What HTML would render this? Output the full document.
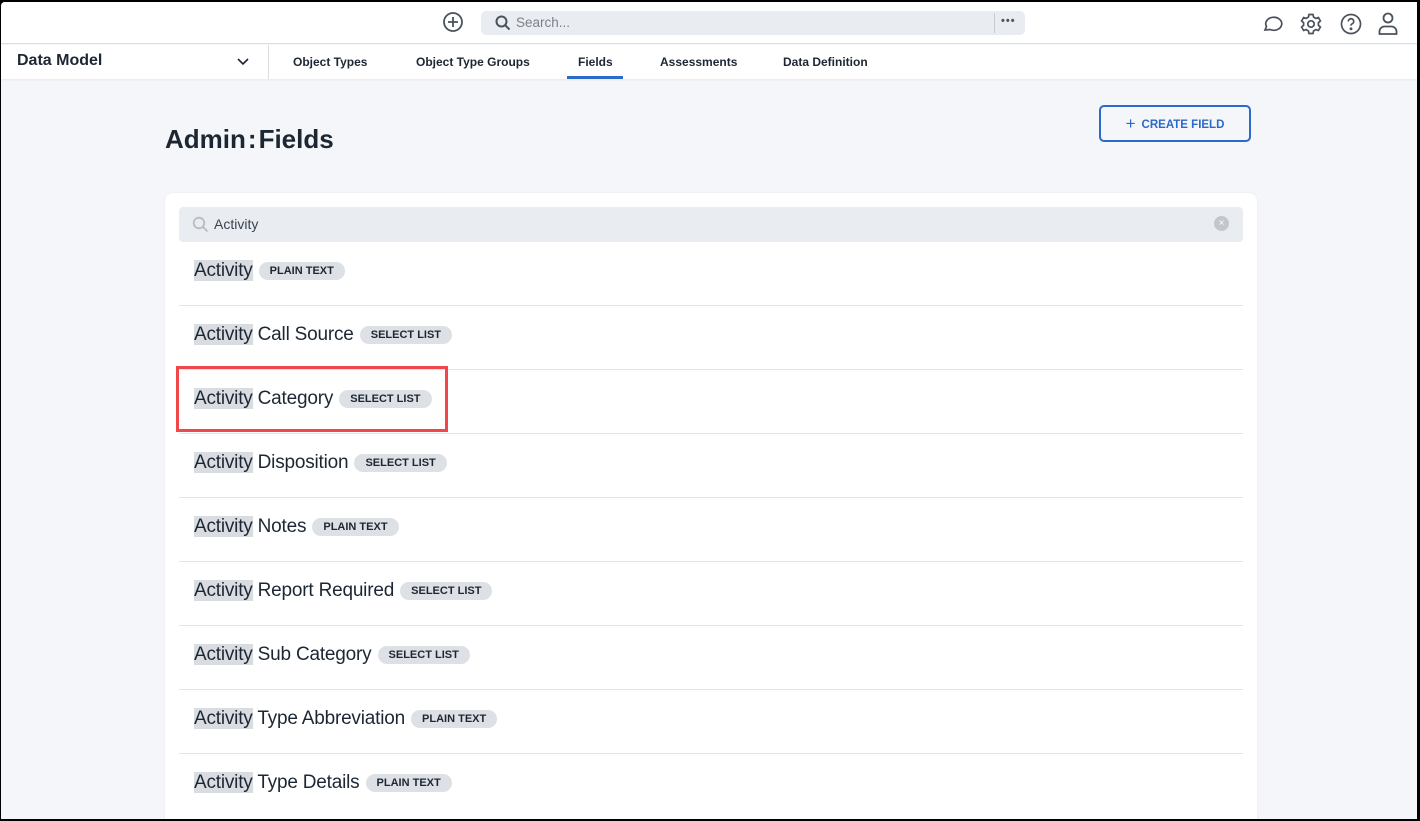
<!DOCTYPE html>
<html><head><style>
*{box-sizing:border-box;margin:0;padding:0}
body{width:1420px;height:821px;background:#000;font-family:"Liberation Sans",sans-serif;overflow:hidden;position:relative}
#app{position:absolute;left:1px;top:2px;width:1416px;height:817px;background:#f5f6fa;overflow:hidden;border-top-left-radius:4px}
.top{position:absolute;left:0;top:0;width:100%;height:42px;background:#fff;border-bottom:1px solid #dcdee2}
.nav{position:absolute;left:0;top:43px;width:100%;height:34px;background:#fff;box-shadow:0 1px 2px rgba(0,0,0,.06)}
.nav .dm{position:absolute;left:16px;top:7px;font-size:16px;font-weight:bold;color:#1d2733}
.nav .sep{position:absolute;left:267px;top:0;width:1px;height:34px;background:#dcdee2}
.tab{position:absolute;top:10px;font-size:12px;font-weight:bold;color:#1d2733}
.search{position:absolute;left:480px;top:9px;width:544px;height:24px;background:#e9ecf0;border-radius:5px}
.search span{position:absolute;left:35px;top:4px;font-size:13.5px;color:#7b828c}
h1{position:absolute;left:164px;top:122px;font-size:26px;color:#1d2733;font-weight:bold}
.btn{position:absolute;left:1098px;top:103px;width:152px;height:37px;border:2px solid #2a6ac9;border-radius:5px;color:#2a6ac9;font-size:11.5px;font-weight:bold;text-align:center;line-height:33px}
.card{position:absolute;left:164px;top:191px;width:1092px;height:640px;background:#fff;border-radius:8px;box-shadow:0 0 3px rgba(0,0,0,.06)}
.fs{position:absolute;left:14px;top:14px;width:1064px;height:35px;background:#e9ecf0;border-radius:4px}
.fs span{position:absolute;left:35px;top:9px;font-size:14px;color:#3a4350}
.row{position:absolute;left:14px;width:1064px;height:64px;border-bottom:1px solid #e2e4e7}
.row .t{position:absolute;left:15px;top:18px;font-size:19px;color:#1d2733;white-space:nowrap;letter-spacing:-0.2px}
.hl{background:#d9dde2}
.b{display:inline-block;vertical-align:2px;margin-left:1px;background:#dde0e4;border-radius:9px;font-size:11px;font-weight:bold;color:#1d2733;padding:3px 11px;line-height:12px;letter-spacing:0}
.red{position:absolute;left:175px;top:364px;width:272px;height:66px;border:3px solid #f0474a}
</style></head><body><div id="app">
<div class="top">
<svg style="position:absolute;left:441px;top:9px" width="22" height="22" viewBox="0 0 22 22" fill="none" stroke="#4a525c" stroke-width="1.8"><circle cx="11" cy="11" r="9"/><path d="M11 6v10M6 11h10"/></svg>
<div class="search"><svg style="position:absolute;left:14px;top:4px" width="16" height="16" viewBox="0 0 16 16" fill="none" stroke="#4a525c" stroke-width="2"><circle cx="6.5" cy="6.5" r="5"/><path d="M10.5 10.5l4 4"/></svg><span>Search...</span><div style="position:absolute;left:513px;top:2px;width:1px;height:20px;background:#c8ccd2"></div><span style="left:520px;top:4px;color:#555;font-weight:bold;letter-spacing:1px;font-size:11px">•••</span></div>
<svg style="position:absolute;left:1260px;top:10px" width="24" height="24" viewBox="0 0 24 24" fill="none" stroke="#4a525c" stroke-width="1.7"><path d="M4 18l1.5-3.5A8 6.5 0 1 1 9 17.5z"/></svg>
<svg style="position:absolute;left:1298px;top:10px" width="24" height="24" viewBox="0 0 24 24" fill="none" stroke="#4a525c" stroke-width="1.7"><circle cx="12" cy="12" r="3.2"/><path d="M10 2.5h4l.6 2.6 2.3 1.3 2.5-.9 2 3.4-2 1.8v2.6l2 1.8-2 3.4-2.5-.9-2.3 1.3-.6 2.6h-4l-.6-2.6-2.3-1.3-2.5.9-2-3.4 2-1.8v-2.6l-2-1.8 2-3.4 2.5.9 2.3-1.3z"/></svg>
<svg style="position:absolute;left:1338px;top:10px" width="24" height="24" viewBox="0 0 24 24" fill="none" stroke="#4a525c" stroke-width="1.7"><circle cx="12" cy="12" r="9.5"/><path d="M9.3 9.5a2.7 2.7 0 1 1 3.6 2.5c-.7.3-.9.8-.9 1.6"/><circle cx="12" cy="16.8" r=".6" fill="#4a525c"/></svg>
<svg style="position:absolute;left:1375px;top:9px" width="24" height="26" viewBox="0 0 24 26" fill="none" stroke="#4a525c" stroke-width="1.8"><circle cx="12" cy="7" r="4.5"/><path d="M3.5 23v-2.5a5 5 0 0 1 5-5h7a5 5 0 0 1 5 5V23z"/></svg>
</div>
<div class="nav"><div class="dm">Data Model</div>
<svg style="position:absolute;left:235px;top:12px" width="14" height="10" viewBox="0 0 14 10" fill="none" stroke="#1d2733" stroke-width="1.6"><path d="M2 2l5 5 5-5"/></svg>
<div class="sep"></div>
<div class="tab" style="left:292px">Object Types</div><div class="tab" style="left:415px">Object Type Groups</div><div class="tab" style="left:577px">Fields</div><div class="tab" style="left:659px">Assessments</div><div class="tab" style="left:782px">Data Definition</div>
<div style="position:absolute;left:566px;top:31px;width:56px;height:3px;background:#2a6ac9"></div></div>
<h1>Admin<span style="margin:0 2px">:</span>Fields</h1>
<div class="btn"><span style="font-size:17px;font-weight:normal;vertical-align:-1px;margin-right:6px">+</span>CREATE FIELD</div>
<div class="card">
<div class="fs"><svg style="position:absolute;left:13px;top:9px" width="17" height="17" viewBox="0 0 17 17" fill="none" stroke="#b9bcc0" stroke-width="1.8"><circle cx="7" cy="7" r="5.3"/><path d="M11 11l4.5 4.5"/></svg><span>Activity</span><div style="position:absolute;left:1035px;top:9px;width:15px;height:15px;border-radius:50%;background:#c4c6c9;color:#fff;font-size:10px;text-align:center;line-height:15px">×</div></div>
<div class="row" style="top:49px"><div class="t"><span class="hl">Activity</span> <span class="b">PLAIN TEXT</span></div></div>
<div class="row" style="top:113px"><div class="t"><span class="hl">Activity</span> Call Source <span class="b">SELECT LIST</span></div></div>
<div class="row" style="top:177px"><div class="t"><span class="hl">Activity</span> Category <span class="b">SELECT LIST</span></div></div>
<div class="row" style="top:241px"><div class="t"><span class="hl">Activity</span> Disposition <span class="b">SELECT LIST</span></div></div>
<div class="row" style="top:305px"><div class="t"><span class="hl">Activity</span> Notes <span class="b">PLAIN TEXT</span></div></div>
<div class="row" style="top:369px"><div class="t"><span class="hl">Activity</span> Report Required <span class="b">SELECT LIST</span></div></div>
<div class="row" style="top:433px"><div class="t"><span class="hl">Activity</span> Sub Category <span class="b">SELECT LIST</span></div></div>
<div class="row" style="top:497px"><div class="t"><span class="hl">Activity</span> Type Abbreviation <span class="b">PLAIN TEXT</span></div></div>
<div class="row" style="top:561px;border:none"><div class="t"><span class="hl">Activity</span> Type Details <span class="b">PLAIN TEXT</span></div></div>
</div>
<div class="red"></div>
</div></body></html>
